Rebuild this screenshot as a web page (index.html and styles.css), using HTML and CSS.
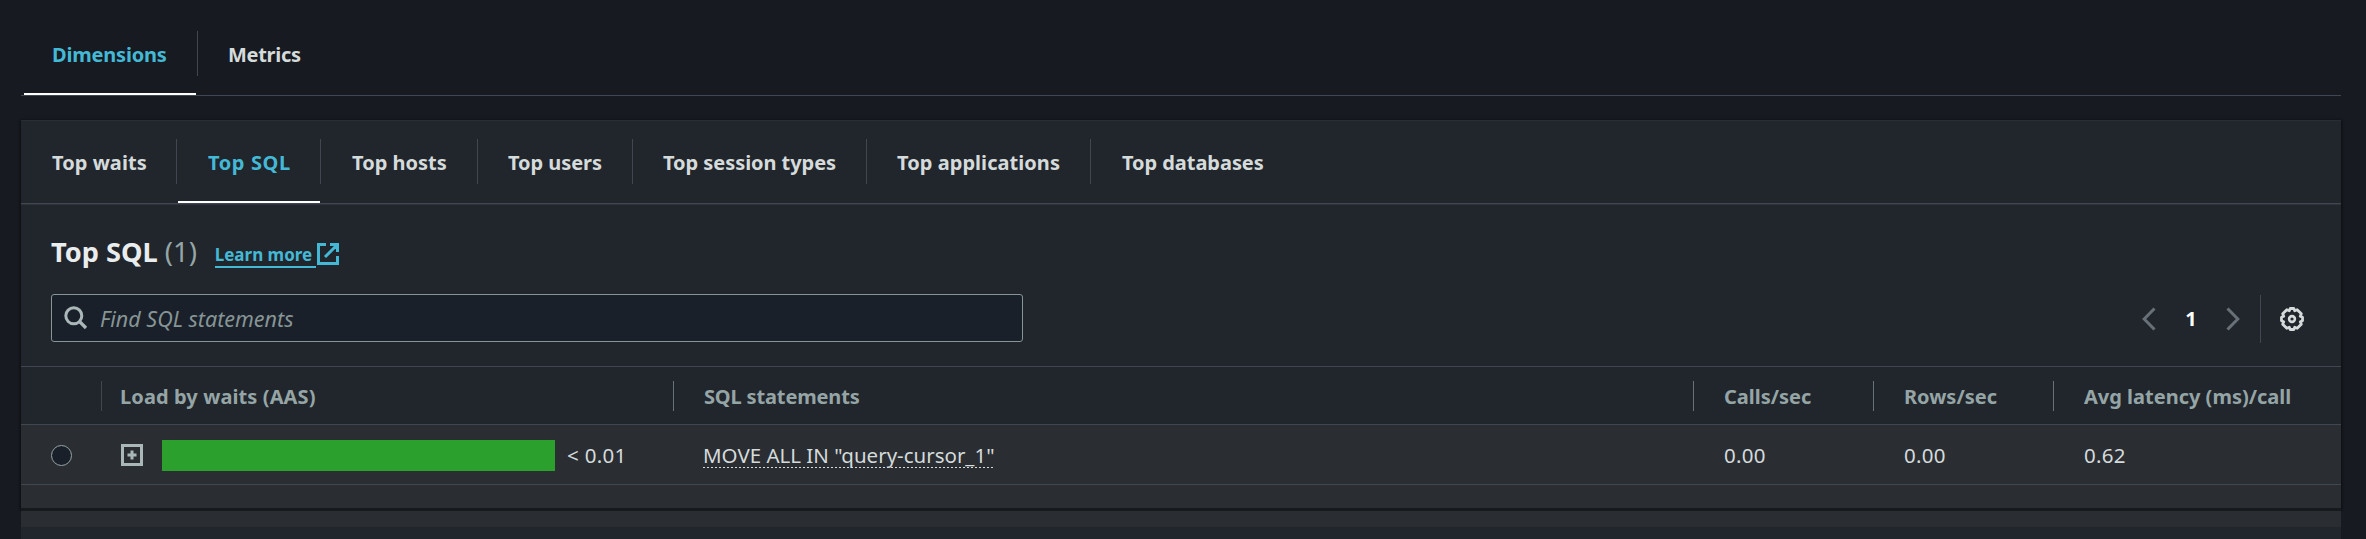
FILE: index.html
```
<!DOCTYPE html>
<html lang="en">
<head>
<meta charset="utf-8">
<title>Top SQL</title>
<link rel="stylesheet" href="styles.css">
</head>
<body>
<main class="page">
  <nav class="tabs tabs-main">
    <a class="tab tab-dimensions active"><span>Dimensions</span></a>
    <a class="tab tab-metrics"><span>Metrics</span></a>
  </nav>
  <section class="panel">
    <nav class="tabs tabs-sub">
      <a class="tab t-waits"><span>Top waits</span></a>
      <a class="tab t-sql active"><span>Top SQL</span></a>
      <a class="tab t-hosts"><span>Top hosts</span></a>
      <a class="tab t-users"><span>Top users</span></a>
      <a class="tab t-session"><span>Top session types</span></a>
      <a class="tab t-apps"><span>Top applications</span></a>
      <a class="tab t-db"><span>Top databases</span></a>
    </nav>
    <header class="title-row">
      <h2>Top SQL</h2><span class="count">(1)</span>
      <a class="learn"><span>Learn more</span><svg width="22" height="22" viewBox="0 0 22 22"><path d="M9 1.500H1.500v19h19V13M13 1.500h7.500V9M20 2 8 14" fill="none" stroke="currentColor" stroke-width="3"/></svg></a>
    </header>
    <div class="tools">
      <div class="search">
        <svg width="24" height="24" viewBox="0 0 24 24"><circle cx="9.800" cy="9.800" r="8" fill="none" stroke="currentColor" stroke-width="3"/><path d="M15.500 15.500 22 22" stroke="currentColor" stroke-width="3.200"/></svg>
        <span>Find SQL statements</span>
      </div>
      <div class="pager">
        <svg class="prev" width="14" height="24" viewBox="0 0 14 24"><path d="M12.500 1.500 2.200 12l10.300 10.500" fill="none" stroke="currentColor" stroke-width="3"/></svg>
        <b>1</b>
        <svg class="next" width="14" height="24" viewBox="0 0 14 24"><path d="M1.500 1.500 11.800 12 1.500 22.500" fill="none" stroke="currentColor" stroke-width="3"/></svg>
        <i class="sep"></i>
        <svg class="gear" width="24" height="24" viewBox="0 0 24 24"><g fill="none" stroke="currentColor"><path stroke-width="2.800" stroke-linejoin="round" d="M10.200 1.500h3.600l.9 2.200 2.500-1 4.100 4.100-1 2.500 2.200.9v3.600l-2.200.9 1 2.500-4.100 4.100-2.500-1-.9 2.200h-3.600l-.9-2.200-2.500 1-4.100-4.100 1-2.500-2.200-.9v-3.600l2.200-.9-1-2.500 4.100-4.100 2.500 1z"/><circle cx="12" cy="12" r="2.900" stroke-width="2.600"/></g></svg>
      </div>
    </div>
    <div class="grid head">
      <div></div>
      <div class="dim load">Load by waits (AAS)</div>
      <div>SQL statements</div>
      <div>Calls/sec</div>
      <div>Rows/sec</div>
      <div>Avg latency (ms)/call</div>
    </div>
    <div class="grid row">
      <div class="pick"><i class="radio"></i></div>
      <div class="load">
        <svg width="22" height="22" viewBox="0 0 22 22"><path d="M1.500 1.500h19v19h-19zM11 6.500v9M6.500 11h9" fill="none" stroke="currentColor" stroke-width="3"/></svg>
        <i class="bar"></i><span>&lt; 0.01</span>
      </div>
      <div><span class="sql">MOVE ALL IN "query-cursor_1"</span></div>
      <div>0.00</div>
      <div>0.00</div>
      <div>0.62</div>
    </div>
  </section>
  <div class="below"></div>
</main>
</body>
</html>
```
FILE: styles.css
```
* { box-sizing: border-box; }
body {
  margin: 0;
  height: 539px;
  overflow: hidden;
  background: #171a21;
  color: #d5dbdb;
  font: 20.5px/28px "Noto Sans", sans-serif;
}
svg { display: block; flex: none; }
.page { width: 2320px; margin-left: 21px; }

.tabs { display: flex; font-weight: 700; font-size: 20px; }
.tab { display: flex; position: relative; height: 45px; padding-left: 31px; white-space: nowrap; border-right: 1px solid #414750; }
.tab span { padding-top: 10px; }
.tab:last-child { border-right: 0; }
.tab.active { color: #44b9d6; }
.tab.active::after { content: ""; position: absolute; left: 1px; right: 1px; bottom: -19px; height: 2px; background: #fff; }
.tabs-main { height: 96px; padding-top: 31px; border-bottom: 1px solid #414750; }
.tab-dimensions { width: 177px; padding-left: 31px; letter-spacing: -.2px; }
.tab-dimensions.active::after { left: 3px; }
.tab-metrics { padding-left: 30px; letter-spacing: -.3px; }

.panel { height: 388px; margin-top: 24px; background: #21252c; border-top: 1px solid #2a2e33; box-shadow: 0 1px 2px 1px #0d0f12; position: relative; }
.tabs-sub { height: 84px; padding-top: 18px; border-bottom: 1px solid #2f3339; box-shadow: inset 0 -1px #414750; }
.tabs-sub .tab.active::after { right: 0; }
.t-waits { width: 156px; letter-spacing: .05px; }
.t-sql { width: 144px; letter-spacing: .6px; }
.t-hosts { width: 157px; }
.t-users { width: 155px; padding-left: 30px; letter-spacing: -.05px; }
.t-session { width: 234px; padding-left: 30px; letter-spacing: -.05px; }
.t-apps { width: 224px; padding-left: 30px; letter-spacing: .05px; }
.t-db { letter-spacing: -.05px; }

.title-row { display: flex; height: 89px; padding-left: 30px; align-items: flex-start; }
h2 { margin: 29px 0 0; font-size: 27.2px; line-height: 36px; font-weight: 700; color: #eaeded; }
.count { margin: 29px 0 0 7px; font-size: 27.5px; line-height: 36px; color: #95a5a6; width: 50px; }
.learn { display: flex; color: #44b9d6; font-size: 17px; font-weight: 700; line-height: 24px; margin-top: 38px; }
.learn span { width: 101px; height: 25px; border-bottom: 2px solid; margin-right: 1.5px; }

.tools { display: flex; height: 72px; justify-content: space-between; padding: 0 37px 0 30px; }
.search { display: flex; align-items: center; width: 972px; height: 48px; padding-left: 12px; border: 1px solid #879596; border-radius: 3px; background: #1a2029; color: #aab7b8; }
.search span { margin-left: 12px; padding-top: 1px; color: #879596; font-style: italic; font-size: 21.5px; }
.pager { display: flex; align-items: center; height: 50px; color: #687078; }
.pager b { width: 70px; text-align: center; color: #fff; font-weight: 700; font-size: 20px; }
.sep { width: 1px; height: 48px; background: #414750; margin: 0 19px 0 20px; }
.gear { color: #d5dbdb; }

.grid { display: grid; grid-template-columns: 80px 572px 1020px 180px 180px 1fr; border-top: 1px solid #414750; }
.head { height: 58px; padding-top: 14px; color: #95a5a6; font-weight: 700; font-size: 20px; }
.head div + div { height: 30px; padding-left: 30px; border-left: 1px solid #687078; line-height: 32px; }
.head div:nth-child(3) { letter-spacing: -.15px; }
.head div.dim { border-color: #414750; padding-left: 18px; letter-spacing: .1px; }
.row { height: 84px; background: #2a2e33; position: relative; }
.row div { height: 60px; padding: 16px 0 0 30px; border-bottom: 1px solid #414750; }
.row div:nth-child(n+4) { padding-left: 31px; letter-spacing: .3px; }
.row .load { display: flex; padding-left: 20px; }
.row .load svg { margin-top: 3px; color: #aab7b8; }
.row .pick { padding-top: 20px; }
.radio { display: block; width: 21px; height: 21px; border: 1px solid #95a5a6; border-radius: 50%; background: #1a2029; }
.bar { width: 393px; height: 31px; margin: -1px 12px 0 19px; background: #2ca02c; }
.load span { letter-spacing: .3px; }
.sql { display: inline-block; height: 27px; background: repeating-linear-gradient(90deg, #d5dbdb 0 2px, transparent 2px 4px) bottom / 100% 1px no-repeat; }

.below { height: 19px; border-top: 3px solid #171a1d; background: #2a2e33; position: relative; box-shadow: 0 12px #21252c; }
```
